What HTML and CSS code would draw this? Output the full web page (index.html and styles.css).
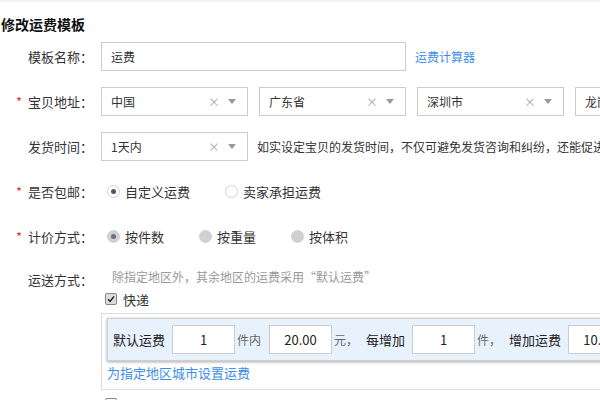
FILE: index.html
```html
<!DOCTYPE html>
<html lang="zh-CN">
<head>
    <meta charset="UTF-8">
    <title>修改运费模板</title>
    <link rel="stylesheet" href="styles.css">
</head>
<body>
    <div class="page">
        <h1 class="page-title">修改运费模板</h1>

        <form class="tpl-form">
            <div class="row">
                <label class="row-label">模板名称：</label>
                <input class="text-input name-input" type="text" value="运费">
                <a class="link calc-link" href="#">运费计算器</a>
            </div>

            <div class="row">
                <label class="row-label"><span class="star">*</span>宝贝地址：</label>
                <div class="select"><span class="select-text">中国</span><span class="clear">×</span><span class="arrow"></span></div>
                <div class="select"><span class="select-text">广东省</span><span class="clear">×</span><span class="arrow"></span></div>
                <div class="select"><span class="select-text">深圳市</span><span class="clear">×</span><span class="arrow"></span></div>
                <div class="select"><span class="select-text">龙岗区</span><span class="clear">×</span><span class="arrow"></span></div>
            </div>

            <div class="row">
                <label class="row-label">发货时间：</label>
                <div class="select"><span class="select-text">1天内</span><span class="clear">×</span><span class="arrow"></span></div>
                <span class="tip">如实设定宝贝的发货时间，不仅可避免发货咨询和纠纷，还能促进成交！</span>
            </div>

            <div class="row">
                <label class="row-label"><span class="star">*</span>是否包邮：</label>
                <span class="radio-item"><span class="radio checked"></span>自定义运费</span>
                <span class="radio-item"><span class="radio"></span>卖家承担运费</span>
            </div>

            <div class="row">
                <label class="row-label"><span class="star">*</span>计价方式：</label>
                <span class="radio-item"><span class="radio disabled checked"></span>按件数</span>
                <span class="radio-item"><span class="radio disabled"></span>按重量</span>
                <span class="radio-item"><span class="radio disabled"></span>按体积</span>
            </div>

            <div class="row row-top">
                <label class="row-label label-tall">运送方式：</label>
                <div class="ship-col">
                    <div class="hint">除指定地区外，其余地区的运费采用“默认运费”</div>
                    <div class="check-item">
                        <span class="checkbox checked">
                            <svg width="12" height="12" viewBox="0 0 12 12"><path d="M2.5 6.2 L5 8.8 L9.6 2.8" fill="none" stroke="#222" stroke-width="1.8"/></svg>
                        </span>
                        快递
                    </div>
                    <div class="ship-box">
                        <div class="fee-row">
                            <span class="fee-label">默认运费</span>
                            <input class="fee-input" type="text" value="1">
                            <span class="unit">件内</span>
                            <input class="fee-input" type="text" value="20.00">
                            <span class="unit">元，</span>
                            <span class="fee-label">每增加</span>
                            <input class="fee-input" type="text" value="1">
                            <span class="unit">件，</span>
                            <span class="fee-label">增加运费</span>
                            <input class="fee-input" type="text" value="10.00">
                            <span class="unit">元</span>
                        </div>
                        <a class="link area-link" href="#">为指定地区城市设置运费</a>
                    </div>
                    <div class="check-item">
                        <span class="checkbox"></span>
                        EMS
                    </div>
                </div>
            </div>
        </form>
    </div>
</body>
</html>
```

FILE: styles.css
```css
* {
    margin: 0;
    padding: 0;
    box-sizing: border-box;
}

html, body {
    overflow: hidden;
}

body {
    font-family: "Noto Sans CJK SC", "Microsoft YaHei", sans-serif;
    color: #333;
    background: #fff;
}

.page {
    border-top: 2px solid #f3f3f3;
    width: 900px;
}

.page-title {
    font-size: 14px;
    font-weight: bold;
    color: #111;
    line-height: 18px;
    padding-top: 13px;
    padding-left: 1px;
    margin-bottom: 9px;
}

.row {
    display: flex;
    align-items: center;
    height: 29px;
    margin-bottom: 16px;
}

.row-top {
    align-items: flex-start;
    height: auto;
}

.row-label {
    width: 93px;
    margin-right: 8px;
    text-align: right;
    font-size: 13px;
    flex-shrink: 0;
}

.label-tall {
    line-height: 26px;
}

.star {
    color: #e4393c;
    margin-right: 6px;
}

.text-input {
    height: 29px;
    border: 1px solid #ccc;
    padding: 0 9px;
    font-size: 12px;
    font-family: inherit;
    color: #333;
    outline: none;
}

.name-input {
    width: 305px;
}

.link {
    color: #3d8ee8;
    text-decoration: none;
    font-size: 12px;
}

.calc-link {
    margin-left: 9px;
}

.select {
    position: relative;
    display: flex;
    align-items: center;
    width: 147px;
    height: 29px;
    border: 1px solid #ccc;
    margin-right: 11px;
    padding-left: 9px;
    font-size: 12px;
    flex-shrink: 0;
}

.select-text {
    flex: 1;
}

.clear {
    color: #aaa;
    font-size: 12px;
    margin-right: 8px;
}

.arrow {
    width: 0;
    height: 0;
    border-left: 4.5px solid transparent;
    border-right: 4.5px solid transparent;
    border-top: 5px solid #999;
    margin-right: 11px;
}

.tip {
    font-size: 12px;
    color: #333;
    white-space: nowrap;
    margin-left: -2px;
}

.radio-item {
    display: flex;
    align-items: center;
    font-size: 13px;
    margin-left: 6px;
    margin-right: 29px;
}

.radio {
    position: relative;
    width: 13px;
    height: 13px;
    border-radius: 50%;
    border: 1px solid #d2d2d2;
    background: #fff;
    margin-right: 5px;
}

.radio.checked::after {
    content: "";
    position: absolute;
    left: 3px;
    top: 3px;
    width: 5px;
    height: 5px;
    border-radius: 50%;
    background: #555;
}

.radio.disabled {
    background: #d0d0d0;
    border-color: #d0d0d0;
}

.radio.disabled.checked::after {
    background: #6e6e6e;
}

.ship-col {
    display: flex;
    flex-direction: column;
}

.hint {
    font-size: 12px;
    color: #999;
    line-height: 20px;
    height: 22px;
    padding-left: 11px;
}

.check-item {
    display: flex;
    align-items: center;
    height: 20px;
    font-size: 13px;
    padding-left: 4px;
}

.checkbox {
    display: flex;
    align-items: center;
    justify-content: center;
    width: 12px;
    height: 12px;
    border: 1px solid #888;
    border-radius: 2px;
    background: #fff;
    margin-right: 6px;
}

.checkbox.checked {
    background: #dcdcdc;
}

.ship-box {
    width: 700px;
    margin-top: 4px;
    border: 1px solid #ddd;
    padding: 4px 5px 6px;
    margin-bottom: 4px;
}

.fee-row {
    display: flex;
    align-items: center;
    background: #e8f2fd;
    border: 1px solid #cfcfcf;
    box-shadow: 0 1px 3px rgba(0, 0, 0, 0.35);
    padding: 6px 5px;
}

.fee-label {
    font-size: 13px;
    color: #222;
    margin-right: 7px;
}

.fee-input {
    width: 63px;
    height: 29px;
    border: 1px solid #ccc;
    text-align: center;
    font-size: 13px;
    font-family: inherit;
    color: #222;
    outline: none;
}

.unit {
    font-size: 12px;
    color: #666;
    margin-left: 2px;
    margin-right: 8px;
}

.area-link {
    display: block;
    font-size: 13px;
    line-height: 20px;
    margin-top: 2px;
}
```
